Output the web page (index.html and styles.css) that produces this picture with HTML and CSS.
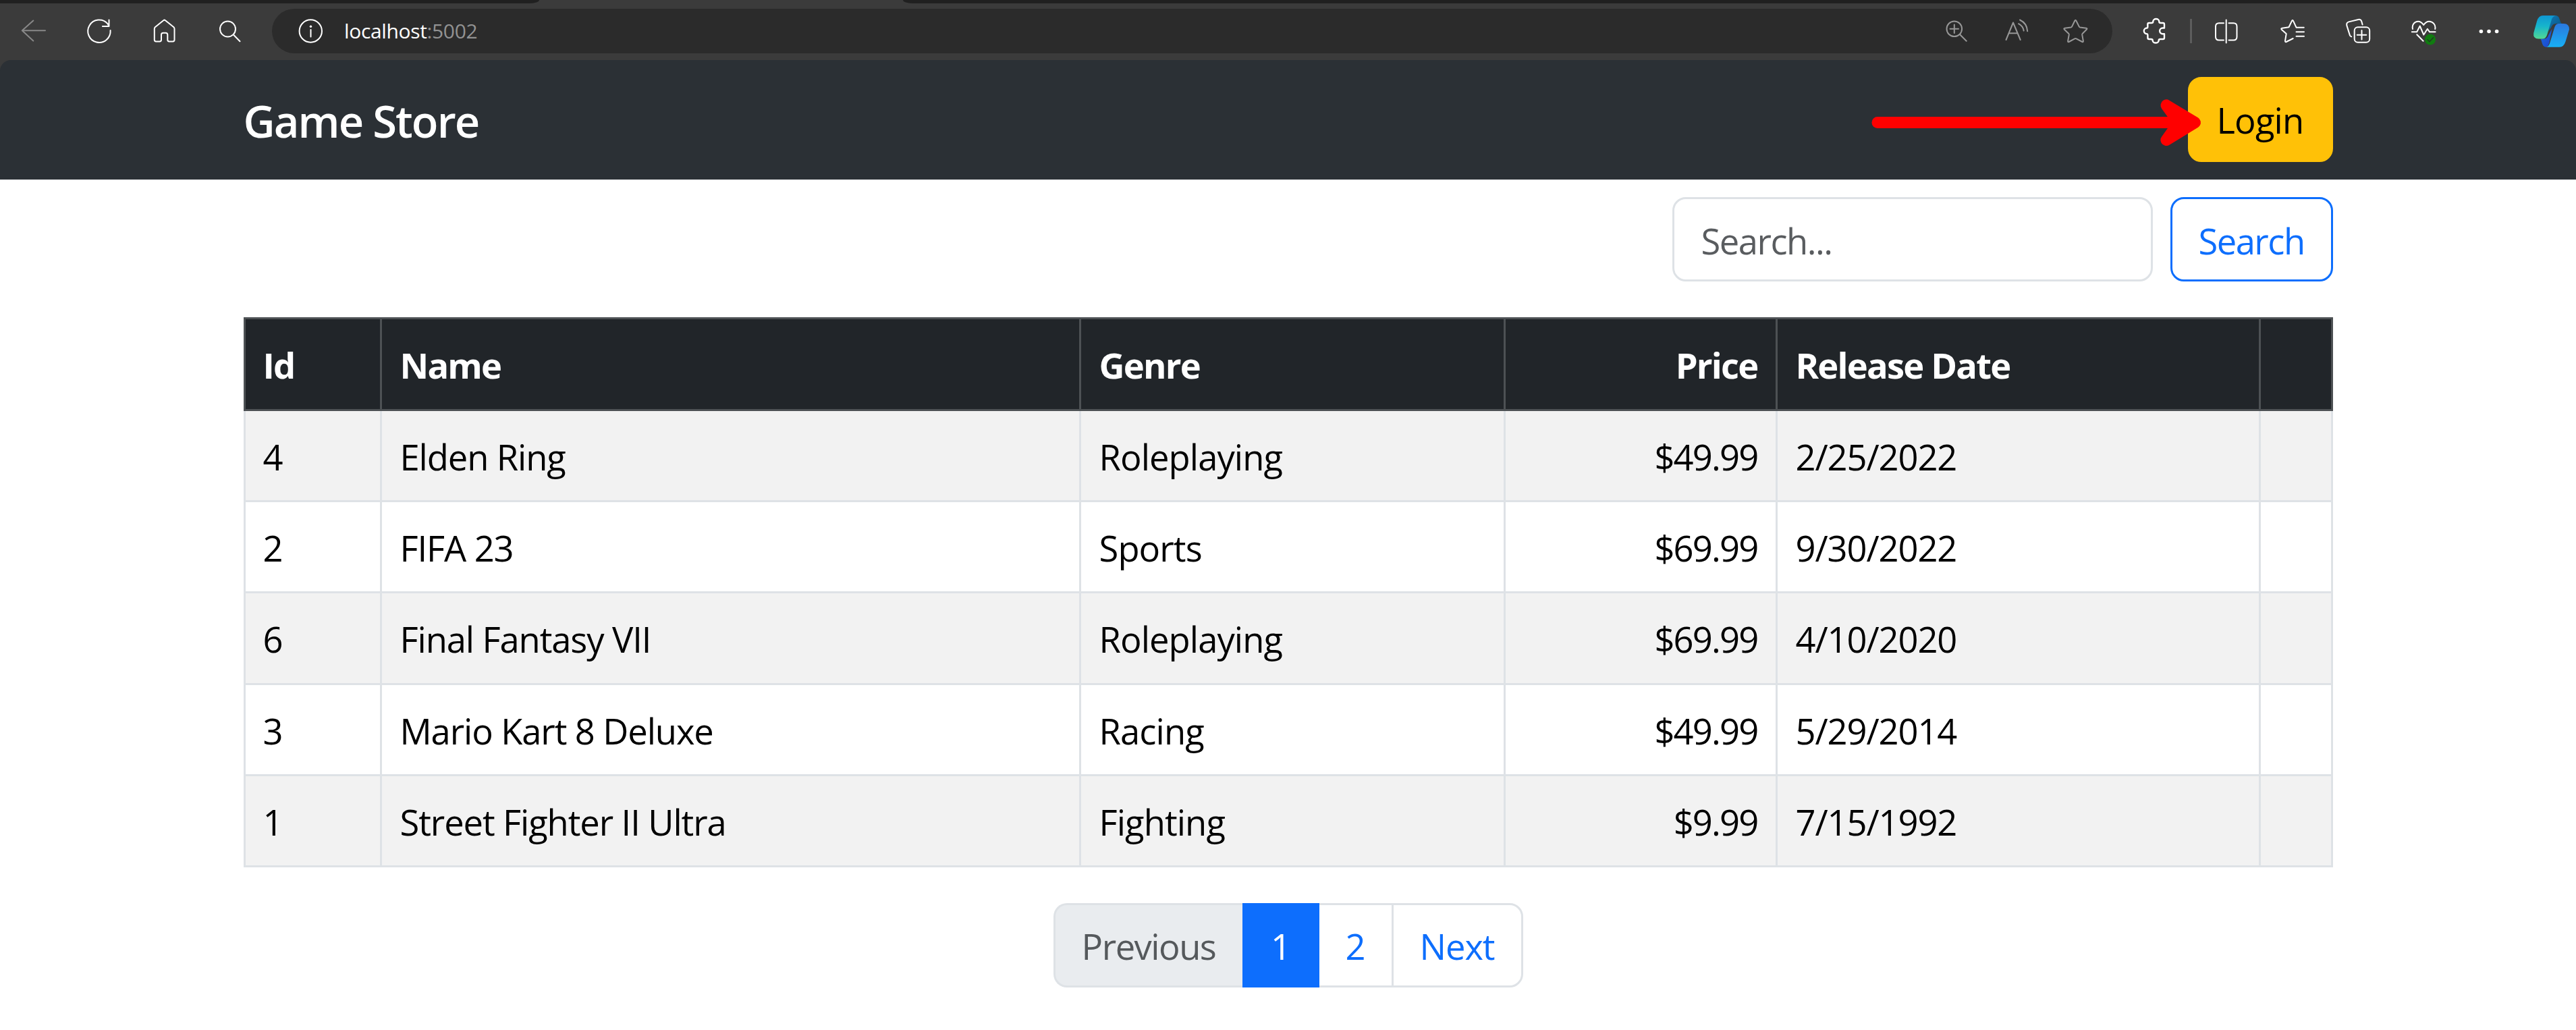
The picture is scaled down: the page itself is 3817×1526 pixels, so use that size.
FILE: index.html
```html
<!DOCTYPE html>
<html lang="en">
<head>
<meta charset="utf-8">
<title>Game Store</title>
<link rel="stylesheet" href="styles.css">
</head>
<body>
<header class="browser">
  <div class="tabstrip"><span class="strip strip-left"></span><span class="tab-active"></span><span class="strip strip-right"></span></div>
  <div class="toolbar">
    <div class="nav-icons">
      <svg class="icon dim" viewBox="30 13 40 66"><path d="M67 45.3H33M49.3 30.5 32.8 45.3 49.3 60.5"/></svg>
      <svg class="icon" viewBox="127 13 40 66"><path d="M163.600 45a16.700 16.700 0 1 1-4.200-9.900l2 3.600M161.500 29.500v9.600h-9.600"/></svg>
      <svg class="icon" viewBox="224 13 40 66"><path d="M242.200 30.200q1.400-1.200 2.800 0L257.500 40.300q1 1 1 2.400V59q0 2.400-2.400 2.400h-5.400q-2.400 0-2.400-2.400v-7.600q0-2.700-2.700-2.700h-3.900q-2.700 0-2.700 2.700V59q0 2.400-2.400 2.400h-5.400q-2.400 0-2.400-2.400V42.700q0-1.400 1-2.400Z"/></svg>
      <svg class="icon" viewBox="321 13 40 66"><circle cx="337.500" cy="43" r="11.500"/><path d="m346 51.500 9.500 9.800"/></svg>
    </div>
    <div class="address">
      <svg class="icon" viewBox="440 13 40 66"><circle cx="460.300" cy="46" r="16.700"/><path d="M460.500 44v10.500"/><circle class="solid" cx="460.500" cy="39.200" r="1.700"/></svg>
      <div class="url">localhost<span class="port">:5002</span></div>
      <div class="address-icons">
        <svg class="icon gray" viewBox="2875 13 40 66"><circle cx="2895.800" cy="42.700" r="11.300"/><path d="M2889.500 42.700h12.500M2895.800 36.500V49M2904 51l9.700 9.700"/></svg>
        <svg class="icon gray" viewBox="2967 13 40 66"><path d="m2972.500 59 10.500-25.500 10.700 25.500M2977 49.300h12M2991 35.200q6.500 3.300 7.700 10.300M2993 29.500q10.500 5 11.200 16.800"/></svg>
        <svg class="icon gray" viewBox="3055 13 40 66"><path d="M3074.300 30.800q1-2 2.100 0l4.300 8.600q.4.900 1.400 1.100l9.300 1.300q1.700.4.600 1.700l-6.200 6.200q-.7.700-.6 1.700l1.700 9.500q.1 1.700-1.500 1.100l-8.800-4.600q-1.200-.6-2.400 0l-8.600 4.600q-1.700.6-1.500-1.200l1.700-9.400q.1-1-.6-1.700l-6.500-6.200q-1-1.400.7-1.700l9.300-1.300q1-.2 1.400-1.100z"/></svg>
      </div>
    </div>
    <div class="tool-icons">
      <svg class="icon bold" viewBox="3172 13 40 66"><path d="M3182.300 36q0-2 2-2h3.700q2.300 0 2.300-2a4.500 4 0 0 1 9 0q0 2 2.300 2h3.400q2 0 2 2v5.500h-2.500a4.300 4.300 0 0 0 0 8.700h2.500v5.800q0 2-2 2h-4q-2.300 0-2.300 2a4.500 3.500 0 0 1-9 0q0-2-2.300-2h-3q-2 0-2-2v-3.600q0-2.300-1.300-2.300a4.300 4.300 0 0 1 0-8.600q1.300 0 1.300-2.300Z"/></svg>
      <span class="divider"></span>
      <svg class="icon" viewBox="3279 13 40 66"><path d="M3295 34.200h-7q-5 0-5 5v15.200q0 5 5 5h7M3302.500 34.200h7q5 0 5 5v15.200q0 5-5 5h-7M3298.700 29.500v34"/></svg>
      <svg class="icon spaced" viewBox="3376 13 40 66"><path d="M3413.800 40.700h-11.300l-4.500-9.800q-1-1.800-2 0l-4.500 9.300-10 1.600q-2 .4-.8 1.900l7 6.400-1.700 10.500q0 2 1.700 1.400l10-5M3402.500 47.200h11.500M3402.500 53.700h11.500"/></svg>
      <svg class="icon spaced" viewBox="3473 13 40 66"><rect x="3488.700" y="40.300" width="22.500" height="22.500" rx="5"/><path d="M3492.700 51.700h13.600M3499.500 45v13.500M3484.200 54.300q-1.800-.3-2.400-2.400l-4.500-14.300q-.8-4 3-5.200l14-3.400q3.800-.8 5 2.700l1.300 4.800"/></svg>
      <svg class="icon spaced" viewBox="3570 13 40 66"><path d="M3575 43c-1.500-6.500 3-11.300 8-11.300 3.800 0 6 2 8.200 5.300 2.200-3.300 4.400-5.300 8.200-5.300 5 0 10.300 4.800 8.800 11.300M3573.800 47.300h7.400l4.500-8.800 5.600 13 5.600-8.700 3.200 4.500h8.500M3581.300 51.200l9.300 9.500"/><circle class="badge" cx="3601" cy="58.500" r="8"/><path class="check" d="m3597 58.700 3 3 5.500-6"/></svg>
      <svg class="icon spaced" viewBox="3667 13 40 66"><g class="solid"><circle cx="3676.400" cy="46.500" r="2.800"/><circle cx="3688" cy="46.500" r="2.800"/><circle cx="3699.600" cy="46.500" r="2.800"/></g></svg>
      <svg class="copilot" viewBox="3751 13 60 66">
        <defs>
          <linearGradient id="gl" x1="0" y1="0" x2="0" y2="1"><stop offset="0" stop-color="#0f96d2"/><stop offset=".45" stop-color="#16b4cc"/><stop offset="1" stop-color="#52d893"/></linearGradient>
          <linearGradient id="gr" x1="0" y1="0" x2="0" y2="1"><stop offset="0" stop-color="#2b78de"/><stop offset="1" stop-color="#18b0f5"/></linearGradient>
          <linearGradient id="gt" x1="0" y1="0" x2="1" y2="1"><stop offset="0" stop-color="#0f78b4"/><stop offset="1" stop-color="#0a5280"/></linearGradient>
          <linearGradient id="gb" x1="0" y1="0" x2="1" y2="1"><stop offset="0" stop-color="#1a6fd8"/><stop offset="1" stop-color="#1c42d0"/></linearGradient>
        </defs>
        <path fill="url(#gt)" d="M3780 23h6.500q4.500 0 6 5l1.500 4.500q.8 2.500 3 2.500h-10q-5 0-7 6l-4 5Z"/>
        <path fill="url(#gb)" d="M3764 57.500h6q4.500 0 6.500-6l5-9-4 20q-2 7.200-4.500 7.200-4.500 0-6-5l-1.500-5q-.5-2-1.500-2.200Z"/>
        <path fill="url(#gl)" d="M3768 23h19q-4.500 1-6 5.500l-7 23.500q-2 5.500-6.500 5.500h-6q-8.500 0-7.300-8.500l5-18q2.500-8 8.800-8Z"/>
        <path fill="url(#gr)" d="M3791 35h8q8 0 8 8.500l-5.500 18q-2.500 8.200-9 8.200h-19.500q3.500-1 5-5.500l7-23q1.800-6.200 6-6.200Z"/>
      </svg>
    </div>
  </div>
</header>
<div class="page">
  <nav class="navbar">
    <div class="container bar">
      <a class="brand">Game Store</a>
      <a class="btn btn-login">Login</a>
    </div>
  </nav>
  <svg class="pointer" viewBox="2765 140 505 84"><path class="shaft" d="M2782 181.500H3240"/><path class="head" d="M3210 156 3252.500 181.500 3210 207.500 3228.500 181.500Z"/></svg>
  <main class="container">
    <form class="search">
      <input class="field" type="text" placeholder="Search...">
      <button class="btn btn-search" type="button">Search</button>
    </form>
    <table class="games">
      <colgroup><col class="c-id"><col class="c-name"><col class="c-genre"><col class="c-price"><col class="c-date"><col class="c-actions"></colgroup>
      <thead><tr><th>Id</th><th>Name</th><th>Genre</th><th class="num">Price</th><th>Release Date</th><th></th></tr></thead>
      <tbody>
        <tr><td>4</td><td>Elden Ring</td><td class="genre">Roleplaying</td><td class="num">$49.99</td><td>2/25/2022</td><td></td></tr>
        <tr><td>2</td><td>FIFA 23</td><td class="genre">Sports</td><td class="num">$69.99</td><td>9/30/2022</td><td></td></tr>
        <tr><td>6</td><td>Final Fantasy VII</td><td class="genre">Roleplaying</td><td class="num">$69.99</td><td>4/10/2020</td><td></td></tr>
        <tr><td>3</td><td>Mario Kart 8 Deluxe</td><td class="genre">Racing</td><td class="num">$49.99</td><td>5/29/2014</td><td></td></tr>
        <tr><td>1</td><td>Street Fighter II Ultra</td><td class="genre">Fighting</td><td class="num">$9.99</td><td>7/15/1992</td><td></td></tr>
      </tbody>
    </table>
    <ul class="pagination">
      <li class="page-item disabled">Previous</li>
      <li class="page-item active">1</li>
      <li class="page-item two">2</li>
      <li class="page-item next">Next</li>
    </ul>
  </main>
</div>
</body>
</html>
```
FILE: styles.css
```css
* { box-sizing: border-box; }

body {
  margin: 0;
  background: #fff;
  color: #000;
  font-family: "Open Sans", "Noto Sans", sans-serif;
  font-size: 52.5px;
  letter-spacing: -1.1px;
}

/* Browser frame */
.browser { height: 89px; background: #3b3b3b; }
.tabstrip { display: flex; height: 5px; }
.strip { background: #202020; }
.strip-left { width: 799px; border-bottom-right-radius: 14px 5px; }
.tab-active { width: 539px; }
.strip-right { flex: 1; border-bottom-left-radius: 14px 5px; }
.toolbar { display: flex; align-items: center; height: 84px; padding: 8px 6px 10px 30px; }
.icon { display: block; flex: none; width: 40px; height: 66px; fill: none; stroke: #fff; stroke-width: 2; stroke-linecap: round; stroke-linejoin: round; }
.dim { stroke: #888; }
.gray { stroke: #979797; }
.bold { stroke-width: 2.4; }
.solid { fill: #fff; stroke: none; }
.badge { fill: #107c10; stroke: none; }
.check { stroke: #1f3d1f; stroke-width: 1.5; }
.nav-icons { display: flex; gap: 57px; }
.address { display: flex; align-items: center; width: 2727px; height: 66px; margin-left: 42px; padding: 0 35px 0 37px; border-radius: 33px; background: #2b2b2b; }
.url { flex: 1; margin-left: 30px; color: #fff; font-size: 30px; line-height: 66px; letter-spacing: -0.35px; }
.port { color: #929292; }
.address-icons { display: flex; }
.address-icons .icon + .icon { margin-left: 52px; }
.address-icons .icon:last-child { margin-left: 48px; }
.tool-icons { display: flex; align-items: center; margin-left: 42px; }
.divider { width: 3px; height: 36px; margin: 0 31px 0 33px; background: #5d5d5d; }
.spaced { margin-left: 57px; }
.copilot { display: block; width: 60px; height: 66px; margin-left: 44px; }

/* Page */
.page { position: relative; background: linear-gradient(#3b3b3b 100px, #fff 100px); }
.container { width: 3096px; margin: 0 auto; }
.navbar { height: 177px; background: #2b3035; border-radius: 16px 16px 0 0; }
.bar { display: flex; align-items: flex-start; justify-content: space-between; padding-top: 25px; }
.brand { color: #fff; font-size: 65px; font-weight: 600; line-height: 130px; letter-spacing: -1.9px; }
.btn { display: block; border: 3px solid; border-radius: 20px; font: inherit; text-align: center; padding: 0; }
.btn-login { width: 215px; height: 126px; border-color: #ffc107; background: #ffc107; line-height: 122px; letter-spacing: -0.8px; }
.pointer { position: absolute; left: 2765px; top: 51px; width: 505px; height: 84px; fill: none; stroke: #f00; stroke-width: 17; stroke-linecap: round; stroke-linejoin: round; }
.head { fill: #f00; }

main { height: 1260px; padding-top: 26px; }
.search { display: flex; justify-content: flex-end; gap: 26px; margin: 0; }
.field { width: 712px; height: 125px; padding: 3px 0 0 40px; border: 3px solid #dee2e6; border-radius: 20px; background: #fff; font: inherit; letter-spacing: -1.5px; }
.field::placeholder { color: #595c5f; opacity: 1; }
.btn-search { width: 241px; height: 125px; padding-top: 3px; border-color: #0d6efd; background: #fff; color: #0d6efd; letter-spacing: -1.5px; }

.games { width: 3096px; margin-top: 53px; table-layout: fixed; border-collapse: separate; border-spacing: 0; }
.c-id { width: 205px; }
.c-name { width: 1036px; }
.c-genre { width: 629px; }
.c-price { width: 403px; }
.c-date { width: 716px; }
.c-actions { width: 107px; }
.games th, .games td { height: 135px; padding: 3px 26px 0 27px; border: 0 solid #dee2e6; border-width: 0 3px 3px 0; line-height: 72px; text-align: left; white-space: nowrap; }
.games th { height: 139px; border-color: #4d5154; border-top-width: 3px; background: #212529; color: #fff; font-weight: 700; letter-spacing: -1.8px; }
.games tr > :first-child { border-left-width: 3px; padding-left: 26px; }
.games tbody tr:nth-child(odd) { background: #f2f2f2; }
.games tbody tr:nth-child(3) td { height: 136px; }
.games .num { text-align: right; }
.games td.num { letter-spacing: -1.8px; }
.games .genre { letter-spacing: -0.9px; }

.pagination { display: flex; justify-content: center; margin: 53px 0 0; padding: 0; list-style: none; }
.page-item { height: 125px; border: 3px solid #dee2e6; line-height: 122px; text-align: center; color: #0d6efd; }
.disabled { width: 280px; border-right: 0; border-radius: 20px 0 0 20px; background: #e9ecef; color: #55595c; letter-spacing: -1.5px; }
.active { width: 114px; border-color: #0d6efd; background: #0d6efd; color: #fff; }
.two { width: 107px; border-left: 0; border-right: 0; }
.next { width: 195px; border-radius: 0 20px 20px 0; }
```
